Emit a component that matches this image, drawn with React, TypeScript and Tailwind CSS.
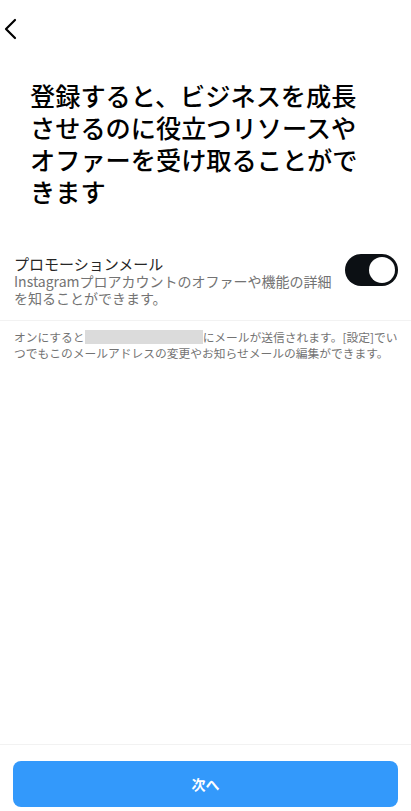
import React from "react";

export default function App() {
  const jp = { fontFamily: '"Noto Sans CJK JP", "Noto Sans", sans-serif' };
  return (
    <div className="w-[411px] h-[811px] bg-white flex flex-col text-[#000]" style={jp}>
      <div className="h-[58px] pl-[1px] pt-[17px]">
        <svg width="24" height="24" viewBox="0 0 24 24" fill="none">
          <path d="M14 3 L5 12 L14 21" stroke="#000" strokeWidth="2.2" strokeLinecap="round" strokeLinejoin="round" />
        </svg>
      </div>
      <div className="pl-[30px] pt-[21px] text-[25.2px] leading-[32px] font-medium text-[#000] whitespace-nowrap">
        <div>登録すると、ビジネスを成長</div>
        <div>させるのに役立つリソースや</div>
        <div>オファーを受け取ることがで</div>
        <div>きます</div>
      </div>
      <div className="mt-[47px] pl-[14px] pr-[13px] pb-[13px] border-b border-[#f2f2f2] flex justify-between items-start">
        <div className="flex flex-col">
          <div className="text-[15px] leading-[19px] text-[#262626]">プロモーションメール</div>
          <div className="text-[14px] leading-[17px] text-[#737373] whitespace-nowrap">
            <div>Instagramプロアカウントのオファーや機能の詳細</div>
            <div>を知ることができます。</div>
          </div>
        </div>
        <div className="w-[53px] h-[32px] rounded-full bg-[#0c1014] flex items-center justify-end pr-[3px] shrink-0">
          <div className="w-[26px] h-[26px] rounded-full bg-white" />
        </div>
      </div>
      <div className="pl-[14px] pt-[8px] text-[11.75px] leading-[16px] text-[#737373] whitespace-nowrap">
        <div className="flex items-center">
          <span>オンにすると</span>
          <span className="inline-block w-[118px] h-[14px] bg-[#dbdbdb]" />
          <span>にメールが送信されます。[設定]でい</span>
        </div>
        <div>つでもこのメールアドレスの変更やお知らせメールの編集ができます。</div>
      </div>
      <div className="flex-1" />
      <div className="border-t border-[#f2f2f2] pt-[16px] pb-[4px] px-[13px]">
        <button className="w-full h-[46px] rounded-[8px] bg-[#3399fb] text-white text-[14px] font-bold flex items-center justify-center">
          次へ
        </button>
      </div>
    </div>
  );
}
